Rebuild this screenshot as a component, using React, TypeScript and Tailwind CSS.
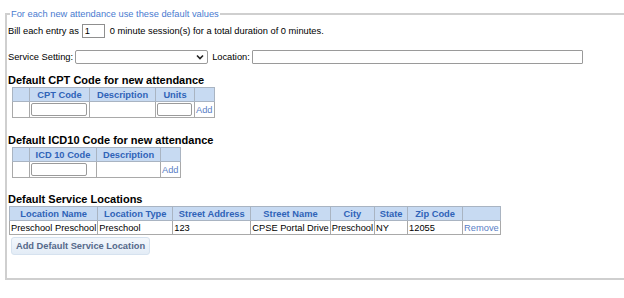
import React from "react";

const th = "border border-[#a9b4c2] bg-[#c7daf2] text-[#2f63b8] font-bold text-center px-[2px] py-0 h-[14px] leading-[12px] whitespace-nowrap";
const td = "border border-[#a9a9a9] px-[1px] py-0 h-[16px] leading-[12px] align-middle whitespace-nowrap";

export default function App() {
  return (
    <div className="w-[624px] h-[298px] overflow-hidden bg-white text-black text-[9.3px] leading-[12px]" style={{ fontFamily: '"Liberation Sans", Arial, sans-serif' }}>
      <fieldset className="ml-[5px] mt-[8px] w-[650px] h-[272px] border-2 border-[#cfcfcf] pl-[1px]">
        <legend className="ml-[2px] px-[1px] text-[#4a7bd0] leading-[12px]">For each new attendance use these default values</legend>
        <div className="flex items-center h-[16px] mt-[3px]">
          <span>Bill each entry as</span>
          <input defaultValue="1" className="ml-[3px] w-[23px] h-[14px] border border-[#8f8f8f] px-[2px] text-[9.3px] leading-[12px]" />
          <span className="ml-[5px]">0 minute session(s) for a total duration of 0 minutes.</span>
        </div>
        <div className="flex items-center h-[16px] mt-[10px]">
          <span>Service Setting:</span>
          <div className="ml-[2px] w-[133px] h-[14px] border border-[#9a9a9a] rounded-[2px] flex items-center justify-end pr-[3px]">
            <svg width="8" height="6" viewBox="0 0 8 6"><path d="M1 1.5 L4 4.5 L7 1.5" fill="none" stroke="#222" strokeWidth="1.6" /></svg>
          </div>
          <span className="ml-[4px]">Location:</span>
          <div className="ml-[2px] w-[331px] h-[14px] border border-[#9a9a9a] rounded-[1px]" />
        </div>

        <div className="mt-[9px] font-bold text-[11px] leading-[13px]">Default CPT Code for new attendance</div>
        <table className="ml-[4px] border-collapse">
          <thead>
            <tr>
              <th className={th + " w-[17px]"}></th>
              <th className={th + " w-[60px]"}>CPT Code</th>
              <th className={th + " w-[66px]"}>Description</th>
              <th className={th + " w-[39px]"}>Units</th>
              <th className={th + " w-[19px]"}></th>
            </tr>
          </thead>
          <tbody>
            <tr>
              <td className={td}></td>
              <td className={td}><div className="w-[56px] h-[13px] border border-[#9a9a9a] rounded-[2px]" /></td>
              <td className={td}></td>
              <td className={td}><div className="w-[35px] h-[13px] border border-[#9a9a9a] rounded-[2px]" /></td>
              <td className={td + " text-[#5a80c6]"}>Add</td>
            </tr>
          </tbody>
        </table>

        <div className="mt-[16px] font-bold text-[11px] leading-[13px]">Default ICD10 Code for new attendance</div>
        <table className="ml-[4px] border-collapse">
          <thead>
            <tr>
              <th className={th + " w-[17px]"}></th>
              <th className={th + " w-[67px]"}>ICD 10 Code</th>
              <th className={th + " w-[64px]"}>Description</th>
              <th className={th + " w-[20px]"}></th>
            </tr>
          </thead>
          <tbody>
            <tr>
              <td className={td}></td>
              <td className={td}><div className="w-[56px] h-[13px] border border-[#9a9a9a] rounded-[2px]" /></td>
              <td className={td}></td>
              <td className={td + " text-[#5a80c6]"}>Add</td>
            </tr>
          </tbody>
        </table>

        <div className="mt-[15px] font-bold text-[11px] leading-[13px]">Default Service Locations</div>
        <table className="ml-[1px] border-collapse">
          <thead>
            <tr>
              <th className={th + " w-[86px]"}>Location Name</th>
              <th className={th + " w-[75px]"}>Location Type</th>
              <th className={th + " w-[78px]"}>Street Address</th>
              <th className={th + " w-[78px]"}>Street Name</th>
              <th className={th + " w-[42px]"}>City</th>
              <th className={th + " w-[33px]"}>State</th>
              <th className={th + " w-[55px]"}>Zip Code</th>
              <th className={th + " w-[37px]"}></th>
            </tr>
          </thead>
          <tbody>
            <tr className="h-[14px]">
              <td className={td + " !h-[14px]"}>Preschool Preschool</td>
              <td className={td + " !h-[14px]"}>Preschool</td>
              <td className={td + " !h-[14px]"}>123</td>
              <td className={td + " !h-[14px]"}>CPSE Portal Drive</td>
              <td className={td + " !h-[14px]"}>Preschool</td>
              <td className={td + " !h-[14px]"}>NY</td>
              <td className={td + " !h-[14px]"}>12055</td>
              <td className={td + " !h-[14px] text-[#5a80c6]"}>Remove</td>
            </tr>
          </tbody>
        </table>
        <button className="block mt-[2px] ml-[3px] w-[139px] h-[18px] border border-[#d6e2ef] rounded-[3px] bg-gradient-to-b from-[#f3f7fc] to-[#e3ecf6] text-[#55698a] font-bold text-[9.3px] leading-[16px] whitespace-nowrap">Add Default Service Location</button>
      </fieldset>
    </div>
  );
}
